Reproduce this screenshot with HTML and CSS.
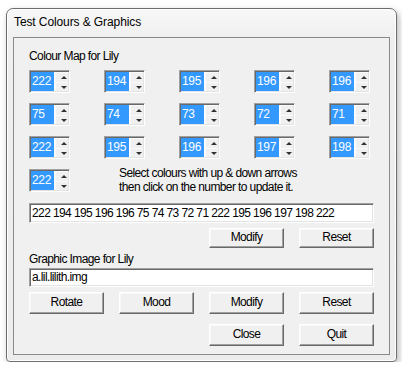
FILE: index.html
```html
<!DOCTYPE html>
<html>
<head>
<meta charset="utf-8">
<link rel="stylesheet" href="styles.css">
</head>
<body>
<div class="window">
  <div class="titlebar">Test Colours &amp; Graphics</div>
  <div class="client">
    <div class="label first">Colour Map for Lily</div>
    <div class="grid">
      <div class="spin"><div class="val">222</div><div class="btns"><div class="up"></div><div class="down"></div></div></div>
      <div class="spin"><div class="val">194</div><div class="btns"><div class="up"></div><div class="down"></div></div></div>
      <div class="spin"><div class="val">195</div><div class="btns"><div class="up"></div><div class="down"></div></div></div>
      <div class="spin"><div class="val">196</div><div class="btns"><div class="up"></div><div class="down"></div></div></div>
      <div class="spin"><div class="val">196</div><div class="btns"><div class="up"></div><div class="down"></div></div></div>
      <div class="spin"><div class="val">75</div><div class="btns"><div class="up"></div><div class="down"></div></div></div>
      <div class="spin"><div class="val">74</div><div class="btns"><div class="up"></div><div class="down"></div></div></div>
      <div class="spin"><div class="val">73</div><div class="btns"><div class="up"></div><div class="down"></div></div></div>
      <div class="spin"><div class="val">72</div><div class="btns"><div class="up"></div><div class="down"></div></div></div>
      <div class="spin"><div class="val">71</div><div class="btns"><div class="up"></div><div class="down"></div></div></div>
      <div class="spin"><div class="val">222</div><div class="btns"><div class="up"></div><div class="down"></div></div></div>
      <div class="spin"><div class="val">195</div><div class="btns"><div class="up"></div><div class="down"></div></div></div>
      <div class="spin"><div class="val">196</div><div class="btns"><div class="up"></div><div class="down"></div></div></div>
      <div class="spin"><div class="val">197</div><div class="btns"><div class="up"></div><div class="down"></div></div></div>
      <div class="spin"><div class="val">198</div><div class="btns"><div class="up"></div><div class="down"></div></div></div>
      <div class="spin"><div class="val">222</div><div class="btns"><div class="up"></div><div class="down"></div></div></div>
      <div class="hint">Select colours with up &amp; down arrows<br>then click on the number to update it.</div>
    </div>
    <div class="field f1">222 194 195 196 196 75 74 73 72 71 222 195 196 197 198 222</div>
    <div class="row r1"><div class="btn short">Modify</div><div class="btn short">Reset</div></div>
    <div class="label second">Graphic Image for Lily</div>
    <div class="field f2">a.lil.lilith.img</div>
    <div class="row r2"><div class="btn">Rotate</div><div class="btn">Mood</div><div class="btn">Modify</div><div class="btn">Reset</div></div>
    <div class="row r3 end"><div class="btn">Close</div><div class="btn">Quit</div></div>
  </div>
</div>
</body>
</html>
```
FILE: styles.css
```css
html, body { margin: 0; padding: 0; background: #ffffff; }
body { font-family: "Liberation Sans", Arial, sans-serif; font-size: 12px; color: #000; }

.window {
  margin: 8px 0 0 6px;
  width: 391px;
  height: 354px;
  box-sizing: border-box;
  border: 1px solid #6e6e6e;
  border-radius: 7px 7px 4px 4px;
  background: linear-gradient(180deg, #f8f8f8 0px, #efefef 30px, #ececec 100%);
  box-shadow: 2px 3px 7px rgba(0,0,0,0.28), inset 0 0 0 1px #ffffff;
  display: flex;
  flex-direction: column;
}
.titlebar {
  height: 28px;
  box-sizing: border-box;
  padding: 6px 0 0 7px;
  font-size: 12px;
  line-height: 14px;
  letter-spacing: -0.1px;
  color: #000;
}
.client {
  margin: 0 6px 6px 6px;
  flex: 1;
  box-sizing: border-box;
  border: 1px solid #8a8a8a;
  background: #f0f0f0;
  padding: 0 0 0 15px;
  letter-spacing: -0.6px;
}
.label { height: 14px; line-height: 14px; }
.label.first { margin-top: 11px; }
.label.second { margin-top: 4px; }

.grid {
  margin-top: 7px;
  display: grid;
  grid-template-columns: repeat(5, 41px);
  column-gap: 34px;
  row-gap: 10px;
}
.spin {
  width: 41px;
  height: 23px;
  box-sizing: border-box;
  border: 1px solid;
  border-color: #a0a0a0 #ffffff #ffffff #a0a0a0;
  box-shadow: inset 1px 1px 0 #696969, inset -1px -1px 0 #e3e3e3;
  padding: 1px 1px 1px 1px;
  display: flex;
  background: #fff;
}
.val {
  width: 22px;
  background: #3399ff;
  color: #fff;
  line-height: 19px;
  padding-left: 1px;
  font-size: 12px;
  letter-spacing: -0.3px;
}
.btns {
  flex: 1;
  display: flex;
  flex-direction: column;
  background: #f0f0f0;
  margin-left: 1px;
}
.up, .down {
  flex: 1;
  position: relative;
  border-top: 1px solid #fafafa;
  border-left: 1px solid #fafafa;
}
.up::after, .down::after {
  content: "";
  position: absolute;
  left: 5px;
  width: 0; height: 0;
  border-left: 3px solid transparent;
  border-right: 3px solid transparent;
}
.up::after { top: 3px; border-bottom: 3px solid #303030; }
.down::after { top: 3px; border-top: 3px solid #303030; }

.hint {
  grid-column: 2 / span 4;
  margin-left: 15px;
  align-self: center;
  line-height: 14px;
  white-space: nowrap;
  margin-top: -3px;
}

.field {
  width: 345px;
  box-sizing: border-box;
  background: #fff;
  border: 1px solid;
  border-color: #a0a0a0 #ffffff #ffffff #a0a0a0;
  box-shadow: inset 1px 1px 0 #696969, inset -1px -1px 0 #e3e3e3;
  padding-left: 2px;
  white-space: nowrap;
  overflow: hidden;
}
.field.f1 { margin-top: 9px; height: 20px; line-height: 18px; }
.field.f2 { margin-top: 2px; height: 19px; line-height: 17px; }

.row { display: flex; gap: 15px; width: 345px; }
.row.r1, .row.end { justify-content: flex-end; }
.row.r1 { margin-top: 5px; }
.row.r2 { margin-top: 5px; }
.row.r3 { margin-top: 10px; }

.btn {
  width: 75px;
  height: 22px;
  box-sizing: border-box;
  border: 1px solid;
  border-color: #ffffff #696969 #696969 #ffffff;
  box-shadow: inset -1px -1px 0 #a0a0a0, inset 1px 1px 0 #f8f8f8;
  background: #f0f0f0;
  text-align: center;
  line-height: 19px;
}
.btn.short { height: 20px; line-height: 17px; }
```
